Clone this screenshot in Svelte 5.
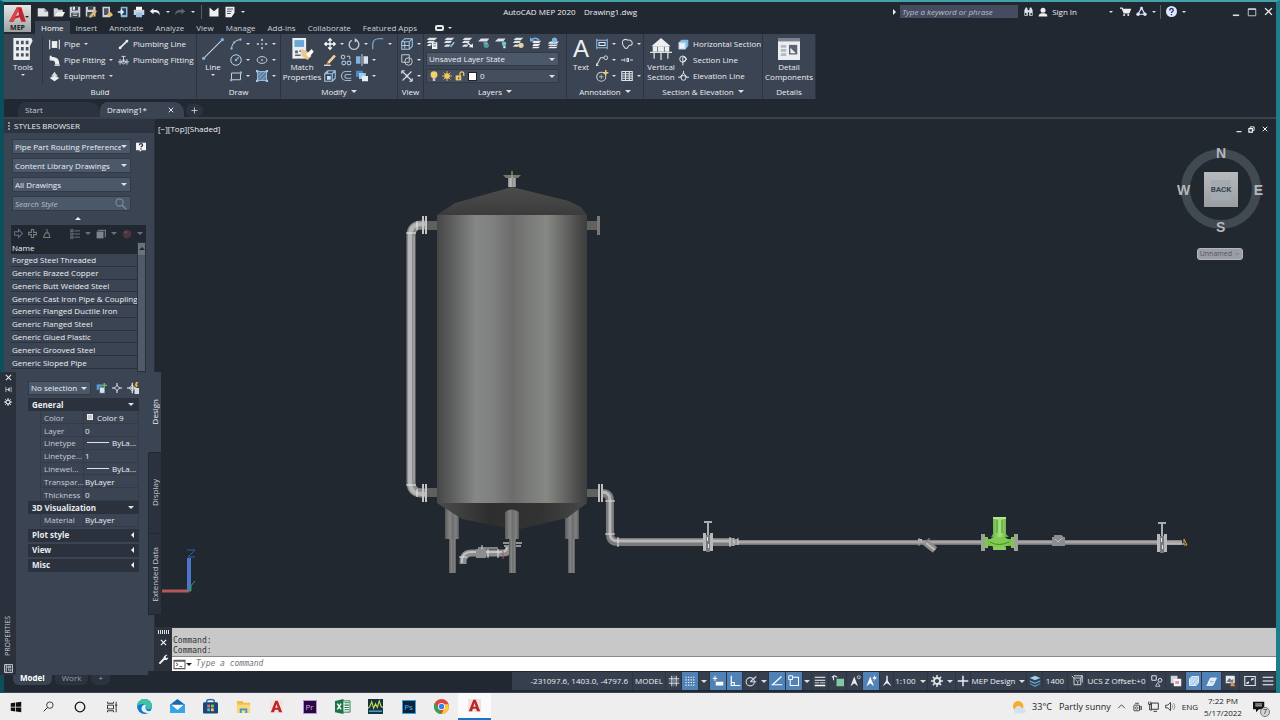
<script>
// every icon is drawn on a 16 x 16 grid
const icons = {
    newFile: '<path d="M1 3h9l5 5v6H1z" fill="#dfe1e4"/><path d="M10 3v5h5z" fill="#8d939c"/>',
    open: '<path d="M1 14V3h5l1 2h6v3H5z" fill="#cfd2d6"/><path d="M5 8h11l-3 6H1z" fill="#f0f0f0"/>',
    save: '<path d="M1 1h14v14H1z" fill="#c9cdd3"/><path d="M4 1h8v5H4zM3 9h10v6H3z" fill="#3b4350"/><path d="M5 1h3v4H5zM5 10h6v1H5zM5 12h6v1H5z" fill="#e9ebee"/>',
    saveAs: '<path d="M1 1h13v13H1z" fill="#c9cdd3"/><path d="M4 1h7v4H4zM3 8h9v6H3z" fill="#3b4350"/><path d="M6 13l7-8 3 2-7 8-3 1z" fill="#e2b866"/>',
    sheet: '<path d="M2 1h10v14H2z" fill="#cfd2d6"/><path d="M4 3h6v9H4z" fill="#4b5563"/><path d="M8 11l5-3 3 4-4 3z" fill="#e3bb62"/>',
    device: '<rect x="5" y="1" width="9" height="14" rx="1" fill="#8bb9dc"/><path d="M7 3h5v9H7z" fill="#2b4258"/><path d="M1 8h7M5 5l3 3-3 3" stroke="#e4f0fa" stroke-width="2" fill="none"/>',
    print: '<path d="M4 1h8v5H4z" fill="#fff"/><path d="M1 5h14v7H1z" fill="#cfd2d6"/><path d="M4 9h8v6H4z" fill="#8fc3ea"/>',
    undo: '<path d="M6 3L1 7l5 4V8.500c5-.5 7 1 8 4 1-5-2-7.500-8-7z" fill="#eceef0"/>',
    redo: '<path d="M10 3l5 4-5 4V8.500c-5-.5-7 1-8 4-1-5 2-7.500 8-7z" fill="#5c6470"/>',
    flag: '<path d="M2 2l6 5 6-5v12H2z" fill="#eceef0"/>',
    form: '<path d="M2 1h12v8l-4 6H2z" fill="#eceef0"/><path d="M4 4h8M4 7h6M4 10h5" stroke="#4b5563" stroke-width="1.500"/>',
    glasses: '<path d="M2 14V6l2-4h2l1 4v8zM9 14V6l1-4h2l2 4v8zM6 6h4v3H6z" fill="#dfe3ea"/><path d="M3 10h2v3H3zM11 10h2v3h-2z" fill="#28303b"/>',
    user: '<circle cx="8" cy="5" r="4" fill="#eceef0"/><path d="M1 15c0-4 3-5 5-5h4c2 0 5 1 5 5z" fill="#eceef0"/>',
    cart: '<path d="M0 3h3l3 7h7l2-5H4" fill="none" stroke="#eceef0" stroke-width="2"/><path d="M5 5h10l-2 5H6z" fill="#eceef0"/><circle cx="6" cy="13" r="1.500" fill="#eceef0"/><circle cx="12" cy="13" r="1.500" fill="#eceef0"/>',
    nodes: '<path d="M8 3L3 12h10z" fill="none" stroke="#dfe6ff" stroke-width="1.800"/><circle cx="8" cy="3" r="2" fill="#dfe6ff"/><circle cx="3" cy="12" r="2.500" fill="#dfe6ff"/><circle cx="13" cy="12" r="2.500" fill="#dfe6ff"/>',
    help: '<circle cx="8" cy="8" r="8" fill="#dfe6ff"/><path d="M5.500 6.500c0-4 5-3.500 5-.5 0 2-2.500 2-2.500 4M8 11.500v2" stroke="#2b3d80" stroke-width="2" fill="none"/>',
    minimize: '<path d="M3 12h10v2.500H3z" fill="#dde1e6"/>',
    maximize: '<path d="M2 3h12v11H2z" fill="none" stroke="#dde1e6" stroke-width="1.300"/><path d="M2 3.500h12" stroke="#dde1e6" stroke-width="2"/>',
    restore: '<path d="M5 5V2h9v8h-3" fill="none" stroke="#fff" stroke-width="2"/><path d="M2 6h8v8H2z" fill="none" stroke="#fff" stroke-width="2.500"/>',
    close: '<path d="M2 2l12 12M14 2L2 14" stroke="currentColor" stroke-width="2.500"/>',
    plus: '<path d="M8 1v14M1 8h14" stroke="currentColor" stroke-width="2"/>',

    tools: '<path d="M2 0h12l1 2-2 4v10H1V0z" fill="#eceef0"/><path d="M3 2h2v2.500H3zM6.500 2h2v2.500h-2zM3 6.500h2V9H3zM6.500 6.500h2V9h-2zM3 11h2v2.500H3zM6.500 11h2v2.500h-2zM10 6.500h2V9h-2zM10 11h2v2.500h-2zM10 2h2v2.500h-2z" fill="#4a5362"/>',
    pipe: '<path d="M1 1v14M15 1v14" stroke="#dfe3e8" stroke-width="1.700"/><path d="M4 3h8v10H4z" fill="#eceef0"/>',
    fitting: '<path d="M1 1v7h3c4 0 5 2 5 6h6C15 6 12 3 4 3V1z" fill="#eceef0"/><path d="M8 14h8v2H8z" fill="#c7cbd1"/>',
    equipment: '<path d="M8 1l5 7H3z" fill="#d4d8dd"/><path d="M1 10l7-3 7 3-7 5z" fill="#eceef0"/>',
    plumbLine: '<path d="M3 13L13 3" stroke="#eceef0" stroke-width="2.500"/><circle cx="3" cy="13" r="2" fill="#eceef0"/><circle cx="13" cy="3" r="2" fill="#eceef0"/>',
    plumbFit: '<path d="M0 10h16M3 6v8M13 6v8M8 2v8M5 2h6" stroke="#dfe3e8" stroke-width="1.300"/><circle cx="8" cy="10" r="3" fill="none" stroke="#dfe3e8"/>',
    line: '<path d="M1 15L15 1" stroke="#c5d2df" stroke-width=".8"/><circle cx="1.200" cy="14.800" r="1.200" fill="#7fb2e2"/><circle cx="14.800" cy="1.200" r="1.200" fill="#7fb2e2"/>',
    arc: '<path d="M2 14C3 7 7 3 14 2" fill="none" stroke="#c5d2df" stroke-width="1.300"/><circle cx="2" cy="14" r="1.600" fill="#7fb2e2"/><circle cx="5.500" cy="6" r="1.600" fill="#7fb2e2"/><circle cx="14" cy="2" r="1.600" fill="#7fb2e2"/>',
    points: '<path d="M8 1v3M8 12v3M1 8h3M12 8h3M7 8h2" stroke="#c5d2df" stroke-width="2"/>',
    circle: '<circle cx="8" cy="8" r="7" fill="none" stroke="#c5d2df" stroke-width="1.300"/><path d="M8 8l4-4" stroke="#7fb2e2" stroke-width="1.500"/><circle cx="8" cy="8" r="1.600" fill="#7fb2e2"/>',
    ellipse: '<ellipse cx="8" cy="8" rx="6.500" ry="4.500" fill="none" stroke="#c5d2df" stroke-width="1.300"/><circle cx="8" cy="8" r="1.500" fill="#7fb2e2"/>',
    rect: '<path d="M2 4h12v9H2z" fill="none" stroke="#c5d2df" stroke-width="1.300"/><path d="M0 12h3v3H0zM13 2h3v3h-3z" fill="#7fb2e2"/>',
    hatch: '<path d="M2 2h12v12H2z" fill="#5d7fa3" stroke="#b7d1ea"/><path d="M2 8l6-6M2 13L13 2M7 14l7-7" stroke="#9fc0df"/><path d="M0 0h3v3H0zM13 0h3v3h-3zM0 13h3v3H0zM13 13h3v3h-3z" fill="#a6c8e8"/>',
    match: '<path d="M1 0h10v15H1z" fill="#eceef0"/><path d="M2.500 1.500h7v5h-7z" fill="#69a8da"/><path d="M3 9h2v2H3zM6 9h3v1H6zM3 12h4v1H3z" fill="#596374"/><path d="M7 8l4 1 4 4-3 3-4-3z" fill="#e9c98b"/><path d="M11 12l4-4 1.500 2-3.500 4z" fill="#fff"/>',
    move: '<path d="M8 1v14M1 8h14M5.500 3.500L8 1l2.500 2.500M5.500 12.500L8 15l2.500-2.500M3.500 5.500L1 8l2.500 2.500M12.500 5.500L15 8l-2.500 2.500" fill="none" stroke="#fff" stroke-width="1.700"/>',
    rotate: '<path d="M11 3a6.500 6.500 0 1 1-6 0" fill="none" stroke="#c5d2df" stroke-width="1.700"/><path d="M9 0l4 3-4 3" fill="#c5d2df"/>',
    fillet: '<path d="M1 15V9c0-5 3-8 8-8h6" fill="none" stroke="#7fb2e2" stroke-width="1.500"/>',
    erase: '<path d="M4 11L13 1l3 2-9 10z" fill="#efd09a"/><path d="M4 11l3 2-4 2z" fill="#d8684c"/><path d="M0 15h9" stroke="#fff" stroke-width="1.500"/>',
    copy: '<circle cx="4" cy="4" r="2.500" fill="none" stroke="#c5d2df" stroke-width="1.300"/><path d="M9 3h4v4" fill="none" stroke="#c5d2df" stroke-width="1.300"/><circle cx="5" cy="12" r="2.500" fill="none" stroke="#9fc3e4" stroke-width="1.500"/><circle cx="12" cy="12" r="2.500" fill="none" stroke="#9fc3e4" stroke-width="1.500"/>',
    mirror: '<path d="M0 3h6v10H0z" fill="#7fb2e2"/><path d="M10 3h6v10h-6z" fill="#d9e4ee"/><path d="M8 0v16" stroke="#fff"/>',
    box: '<path d="M1 5h10v10H1zM1 5l4-4h10v10l-4 4M11 5l4-4M5 1v4" fill="none" stroke="#9cc3e6" stroke-width="1.500"/><path d="M4 8h5v5H4z" fill="#c9dff2"/>',
    offset: '<path d="M15 2H8a6 6 0 0 0 0 12h7M15 6H9a2.500 2.500 0 0 0 0 5h6" fill="none" stroke="#9fb9d2" stroke-width="1.600"/>',
    stack: '<path d="M0 1h9v8H0z" fill="#4d8cc0"/><path d="M4 4h9v8H4z" fill="#9ccaf0"/><path d="M8 8h8v7H8z" fill="#eceef0"/>',
    view3d: '<path d="M1 5h10v10H1zM1 5l4-4h10v10l-4 4M11 5l4-4M5 5v9M1 10h10" fill="none" stroke="#a9c8e6" stroke-width="1.400"/>',
    region: '<path d="M1 1h10v10H1z" fill="none" stroke="#c5cdd6" stroke-width="1.300"/><circle cx="10" cy="10" r="5" fill="none" stroke="#c5cdd6" stroke-width="1.300"/>',
    explode: '<path d="M2 2l12 12M14 2L2 14M1 1v4M1 1h4M15 15v-4M15 15h-4" stroke="#d6dbe1" stroke-width="1.500"/><circle cx="8" cy="8" r="2" fill="#d6dbe1"/>',
    layerProps: '<path d="M4 1h11l-3 3H1zM4 5h8l-3 3H1zM4 9h4l-2 3H1z" fill="#dfe3e8"/><path d="M8 7h7v9H8z" fill="#f4f5f6"/><path d="M9.500 9h4M9.500 12h4" stroke="#4d5868"/>',
    layerSet: '<path d="M5 1h10l-3 3H2zM4 5h8l-2 3H1zM4 10h6l-2 3H1z" fill="#dfe3e8"/><path d="M10 13l5-6" stroke="#8fc3ea" stroke-width="2"/>',
    layerMove: '<path d="M5 1h10l-3 3H2zM4 5h8l-2 3H1zM4 10h6l-2 3H1z" fill="#dfe3e8"/><path d="M9 8l6 5v-4M15 13h-4" stroke="#fff" stroke-width="1.500" fill="none"/>',
    layerOff: '<path d="M4 2h11l-3 4H0z" fill="#dfe3e8"/><circle cx="11" cy="11" r="3.500" fill="#4f9c9b"/><path d="M7 8h6" stroke="#dfe3e8"/>',
    layerBulb: '<path d="M4 2h10l-3 4H0z" fill="#dfe3e8"/><circle cx="12" cy="9" r="3" fill="#67c9c9"/><path d="M11 12h3v3h-3z" fill="#dfe3e8"/>',
    layerLock: '<path d="M5 1h10l-3 3H2zM4 5h8l-2 3H1zM4 10h6l-2 3H1z" fill="#dfe3e8"/><circle cx="12" cy="11" r="3.500" fill="#e5cf9b"/>',
    layerPrev: '<path d="M5 5h10l-3 3H3zM5 9h9l-3 3H3zM4 13h9l-2 2H3z" fill="#eceef0"/><path d="M12 4C9 1 5 1 2 4M1 1v4h4" fill="none" stroke="#67b5e8" stroke-width="2"/>',
    layerWalk: '<path d="M4 6h12l-3 3H1zM4 10h11l-3 2H1zM4 13h10l-2 2H1z" fill="#eceef0"/><circle cx="10" cy="4" r="3.500" fill="#77b8e3"/>',
    bulb: '<circle cx="8" cy="6" r="5.500" fill="#f4d070"/><path d="M6 11h4v5H6z" fill="#c2c6cc"/>',
    sun: '<circle cx="8" cy="8" r="4.500" fill="#f3c95c"/><path d="M8 0v16M0 8h16M2.500 2.500l11 11M13.500 2.500l-11 11" stroke="#f3c95c" stroke-width="1.300"/>',
    unlock: '<path d="M1 7h9v8H1z" fill="#f0c96c"/><path d="M8 7V3.500c0-3 6-3 6 0V8" fill="none" stroke="#f0c96c" stroke-width="2"/><path d="M5 10h2v3H5z" fill="#4b5666"/>',
    dim: '<path d="M1 1v14M15 1v14M1 3h14M1 13h14" stroke="#8dbbe4" stroke-width="1.400"/><path d="M4 6h8v4H4z" fill="none" stroke="#e6ebf0" stroke-width="1.400"/>',
    cloud: '<path d="M3 3c3-2 5-1 6 0 4-1 6 2 6 4s-2 3-4 3-1 4-4 4-3-3-4-4-2-5 0-7z" fill="none" stroke="#d6dbe1" stroke-width="1.400"/>',
    leader: '<path d="M1 15L6 5h5" fill="none" stroke="#d6dbe1" stroke-width="1.400"/><circle cx="13" cy="5" r="2.500" fill="none" stroke="#d6dbe1" stroke-width="1.300"/><path d="M0 12l4 4H0z" fill="#d6dbe1"/>',
    gap: '<path d="M0 8h4M12 8h4M5 6v4M8 6h2v4H8z" fill="none" stroke="#d6dbe1" stroke-width="1.400"/>',
    tag: '<circle cx="7" cy="9" r="6" fill="none" stroke="#c8ced6" stroke-width="1.400"/><path d="M4 9h6M7 6v6" stroke="#c8ced6"/><path d="M13 0v7M9.500 3.500h7" stroke="#f0c96c" stroke-width="2"/>',
    table: '<path d="M1 2h14v12H1zM1 5h14M1 8h14M1 11h14M6 2v12M11 2v12" fill="none" stroke="#dfe3e8" stroke-width="1.400"/>',
    house: '<path d="M8 0l7 6H1z" fill="#eceef0"/><path d="M2 6h12v4H2z" fill="#eceef0"/><path d="M0 10.500h16M3 10v5M8 10v6M13 10v5" fill="none" stroke="#dfe3e8" stroke-width=".9"/><path d="M5.500 6.500V10M10.500 6.500V10" stroke="#59616d" stroke-width=".6"/>',
    hSection: '<path d="M1 5l4-4h10v9l-4 5H1z" fill="#7fb8e6"/><path d="M1 5h10v10H1z" fill="#d5e3ef"/><path d="M3 7h6v6H3z" fill="#edf2f6"/>',
    sLine: '<circle cx="7" cy="6" r="4.500" fill="none" stroke="#e3e7ec" stroke-width="1.400"/><path d="M7 3v12M7 2l6 4-6 4" fill="none" stroke="#e3e7ec" stroke-width="1.400"/>',
    eLine: '<path d="M0 9h4M12 9h4M3 9l5-6 5 6M8 0v3" fill="none" stroke="#e3e7ec" stroke-width="1.400"/><circle cx="8" cy="10" r="3.500" fill="none" stroke="#e3e7ec" stroke-width="1.400"/>',
    detail: '<path d="M0 0h16v16H0z" fill="#eceef0"/><path d="M0 0h16v2.500H0z" fill="#7b838f"/><path d="M2 5h4v2H2zM2 8h4v2H2zM2 11h4v2H2z" fill="#b5bac1"/><path d="M8 5h6v7H8z" fill="#596374"/><path d="M9 7l4 4H9z" fill="#eceef0"/>',

    question: '<path d="M0 1h16v12H9l-3 3v-3H0z" fill="#f2f4f6"/><path d="M5.500 5c0-3 5-3 5 0 0 2-2.500 1.500-2.500 3.500M8 10v2" fill="none" stroke="#252c36" stroke-width="2"/>',
    search: '<circle cx="6" cy="6" r="4.800" fill="none" stroke="currentColor" stroke-width="1.600"/><path d="M9.500 9.500L15 15" stroke="currentColor" stroke-width="2"/>',
    arrowR: '<path d="M1 5h7V1l7 7-7 7v-4H1z" fill="none" stroke="#66717c" stroke-width="1.800"/>',
    cross: '<path d="M6 1h4v5h5v4h-5v5H6v-5H1V6h5z" fill="none" stroke="#747f79" stroke-width="1.800"/>',
    broom: '<path d="M9 0v7M3 14l3-7h6l2 8H3z" fill="none" stroke="#77807c" stroke-width="1.800"/>',
    list: '<path d="M1 1h4v3H1zM1 6.500h4v3H1zM1 12h4v3H1zM7 3h9M7 8h9M7 13h9" fill="none" stroke="#6c757f" stroke-width="1.500"/>',
    cube: '<path d="M1 4h11v11H1z" fill="#7c848c"/><path d="M3 2h12v11" fill="none" stroke="#6c757f" stroke-width="2"/>',
    ball: '<circle cx="8" cy="8" r="7" fill="#49353a"/><circle cx="6" cy="5" r="2" fill="#67505a"/>',
    selAdd: '<path d="M1 2h8v8H1z" fill="#5b9bd0"/><path d="M5 6h8v9H5z" fill="#d7e2ec" stroke="#33465c"/><path d="M12 0v7M9 3.500h7" stroke="#65c466" stroke-width="2"/>',
    target: '<path d="M8 0v5M8 11v5M0 8h5M11 8h5" stroke="#f4f5f6" stroke-width="1.600"/><path d="M8 4l4 4-4 4-4-4z" fill="none" stroke="#f4f5f6" stroke-width="1.300"/>',
    quick: '<path d="M7 1v14M0 8h12" stroke="#f4f5f6" stroke-width="1.500"/><path d="M7 4l4 4-4 4-4-4z" fill="none" stroke="#f4f5f6"/><path d="M10 8h6v8h-6z" fill="#d8dbe0"/><path d="M12 0h3l-2 4h2l-4 5 1-4h-2z" fill="#efb54a"/>',
    pin: '<path d="M2 2v12M14 2v12M2 8h4M10 4l-4 4 4 4z" stroke="#cfd4da" stroke-width="1.700" fill="#cfd4da"/>',
    gear: '<circle cx="8" cy="8" r="4" fill="none" stroke="#dfe3e8" stroke-width="2.500"/><path d="M8 0v4M8 12v4M0 8h4M12 8h4M2.500 2.500L5 5M11 11l2.500 2.500M13.500 2.500L11 5M5 11l-2.500 2.500" stroke="#dfe3e8" stroke-width="2"/>',
    panel: '<path d="M1 1h14v14H1zM4 1v14M7 4h5v3H7zM7 10h2v3M12 9v4" fill="none" stroke="#dfe3e8" stroke-width="1.500"/>',
    wrench: '<path d="M2 14l7-7" stroke="#f0f1f3" stroke-width="3"/><path d="M8 8c-1-4 2-7 6-7l-3 3 1 2 3-1c0 3-3 5-7 3z" fill="#f0f1f3"/>',
    prompt: '<path d="M0 2h16v12H0z" fill="#fff" stroke="#5a5a5a" stroke-width="1.500"/><path d="M0 3h16" stroke="#5a5a5a" stroke-width="2"/><path d="M3 6l3 2-3 2M8 11h4" fill="none" stroke="#444" stroke-width="1.200"/>',

    grid: '<path d="M5 1v14M11 1v14M1 5h14M1 11h14" stroke="#dfe3e8" stroke-width="1.300"/><path d="M8 1v14M1 8h14" stroke="#9aa2ad" stroke-width="1"/>',
    snap: '<path d="M2 3h12M2 6.500h12M2 10h12M2 13.500h12" stroke="#fff" stroke-width="1.600" stroke-dasharray="1.600 1.800"/>',
    dynIn: '<path d="M4 1v7M1 4.500h6" stroke="#fff" stroke-width="1.300"/><path d="M5 9h10v5H5z" fill="#fff"/>',
    ortho: '<path d="M3 1v13h12M3 10h4v4" fill="none" stroke="#fff" stroke-width="1.600"/>',
    polar: '<circle cx="7" cy="9" r="5.500" fill="none" stroke="#cfd4da" stroke-width="1.500"/><path d="M7 9l8-7M7 9h8" stroke="#cfd4da" stroke-width="1.500"/>',
    track: '<path d="M14 2L2 13h13" fill="none" stroke="#fff" stroke-width="1.600"/>',
    osnap: '<path d="M3 3h11v11H3z" fill="none" stroke="#fff" stroke-width="1.400"/><path d="M1 1h5v5H1z" fill="#5889bd" stroke="#fff" stroke-width="1.300"/>',
    weight: '<path d="M1 3h14M1 7h14" stroke="#fff" stroke-width="1.300"/><path d="M1 10h6v1H1zM8 10h7v1H8zM1 13h14v2H1z" fill="#fff"/>',
    cycle: '<path d="M2 1v6M0 3l3-2 4 2" fill="none" stroke="#dfe3e8" stroke-width="1.500"/><path d="M6 5h10v10H6z" fill="#83c8a3"/>',
    anno: '<path d="M7 2L2 15l5-4 5 4z" fill="#e8ebee"/><circle cx="13" cy="3" r="2" fill="none" stroke="#e8ebee"/>',
    annoAuto: '<path d="M7 2L2 15l5-4 5 4z" fill="#fff"/><path d="M13 0l-3 5h3l-2 4 5-6h-3z" fill="#fff"/>',
    annoOne: '<path d="M8 1v5L2 15l6-4 6 4-6-9" fill="#e8ebee"/><path d="M7 1h2v8H7z" fill="#e8ebee"/>',
    layers: '<path d="M8 1l7 3-7 3-7-3z" fill="#9fd0f2"/><path d="M1 7l7 3 7-3v2l-7 3-7-3zM1 11l7 3 7-3v1l-7 4-7-4z" fill="#5f9ed0"/>',
    ucs: '<path d="M4 4h9v9H4zM4 4L1 1M13 4l2-3M4 1h11v9" fill="none" stroke="#cfd4da" stroke-width="1.300"/><path d="M6 6l3 3 3-3M9 9v4" fill="none" stroke="#cfd4da"/>',
    shapes: '<path d="M1 1h6v6H1z" fill="none" stroke="#dfe3e8" stroke-width="1.300"/><circle cx="12" cy="7" r="2.500" fill="none" stroke="#dfe3e8" stroke-width="1.300"/><path d="M6 15l3-5 3 5z" fill="none" stroke="#dfe3e8"/>',
    pages: '<path d="M1 1h9v10H1z" fill="#cfd4da"/><path d="M5 5h10v10H5z" fill="#f3f3f3"/><path d="M7 8h5v4H7z" fill="#e49a9f"/>',
    hatched: '<path d="M2 5l3-3h9v8l-3 4H2z" fill="#a9cdeb" stroke="#fff"/><path d="M2 9l5-5M2 13l9-9M7 14l6-7" stroke="#fff"/>',
    clip: '<path d="M3 10l3-6h8l-2 4zM1 14l3-5h8l-3 5z" fill="#d9eafa" stroke="#fff"/><path d="M5 9h5" stroke="#5082b8"/>',
    photo: '<path d="M1 1h12v10H1z" fill="#e9ecef"/><path d="M2 9l4-5 3 3 2-2v5z" fill="#6b7584"/><path d="M9 8l5 7H7z" fill="#e58b4c"/>',
    screen: '<path d="M1 2h14v12H1z" fill="none" stroke="#dfe3e8" stroke-width="1.500"/><path d="M3 11l3-2v2zM13 5l-3 2V5z" fill="#fff" stroke="#fff"/>',
    menu: '<path d="M1 3h14M1 8h14M1 13h14" stroke="#fff" stroke-width="1.500"/>',

    windows: '<path d="M1 3l6-1v5.500H1zM8 2l7-1v6.500H8zM1 8.500h6V14l-6-1zM8 8.500h7V15l-7-1z" fill="#111"/>',
    find: '<circle cx="10" cy="6" r="4.700" fill="none" stroke="#222" stroke-width="1.200"/><path d="M6.500 9.500L1 15" stroke="#222" stroke-width="1.400"/>',
    cortana: '<circle cx="8" cy="8" r="6.400" fill="none" stroke="#111" stroke-width="1.700"/>',
    tasks: '<path d="M2 1v2h8V1M2 15v-2h8v2M2 5.500h8v5H2zM13.500 1v14M12 5.500h3" fill="none" stroke="#222" stroke-width="1.200"/>',
    edge: '<circle cx="8" cy="8" r="8" fill="#1679c8"/><path d="M0 8C0 3 4 0 8 0c5 0 8 3.500 8 7 0 3-2 4-4 4s-3-1-2-3c0-3-6-4-10 0z" fill="#3ec3a6"/><path d="M6 7c-3 4 0 8 5 8 2 0 4-1 5-3-3 2-7 1-7-3 0-1 1-2 0-3-1 0-2 0-3 1z" fill="#e7f4fb"/>',
    mail: '<path d="M0 6l8-6 8 6v9H0z" fill="#1469b5"/><path d="M1 6h14l-7 6z" fill="#f3f8fc"/><path d="M0 6l8 6 8-6v9H0z" fill="#33a7ec"/>',
    store: '<path d="M4 4V2c0-2 8-2 8 0v2" fill="none" stroke="#2c6da5" stroke-width="1.500"/><rect y="3.500" width="16" height="12" rx="1.500" fill="#1a4778"/><path d="M4.500 6h3v3h-3z" fill="#f06a4b"/><path d="M8.500 6h3v3h-3z" fill="#8ac653"/><path d="M4.500 10h3v3h-3z" fill="#4db4f0"/><path d="M8.500 10h3v3h-3z" fill="#f8c84c"/>',
    folder: '<path d="M1 2h6l1 2h7v11H1z" fill="#efbd48"/><path d="M1 6h14v9H1z" fill="#fbd979"/><path d="M4 10h8v5h-2v-3H6v3H4z" fill="#3f96cc"/>',
    acad: '<path d="M0 0h16v16H0z" fill="#f4e1de"/><path d="M6.500 1h3L15 15h-4l-1-3H6l-1 3H1zM8 5l-1.500 4.500h3z" fill="#b8282b" fill-rule="evenodd"/>',
    logo: '<path d="M7 1h4l4 13h-4l-1.500-4-4 1L4 14H0zM8 4L6 9l3-1z" fill="#c3222c" fill-rule="evenodd"/><path d="M7 1L0 14l4-1L9 3z" fill="#dc4448"/>',
    excel: '<path d="M8 2h8v12H8z" fill="#fff" stroke="#1f7a48"/><path d="M10 4h5M10 6.500h5M10 9h5M10 11.500h5" stroke="#1f7a48" stroke-width="1.200"/><path d="M0 2l9-2v16l-9-2z" fill="#1c7343"/><path d="M2.500 5l4 6M6.500 5l-4 6" stroke="#fff" stroke-width="1.600"/>',
    wave: '<path d="M0 0h16v16H0z" fill="#123444"/><path d="M0 10l2-2 2-5 2 7 2-5 2 4 2-7 2 6 2 1" fill="none" stroke="#cdda4a" stroke-width="1.200"/><path d="M1 13h14" stroke="#57a7cf" stroke-width="1.500"/>',
    chrome: '<circle cx="8" cy="8" r="8" fill="#e0443a"/><path d="M1 4l4.500 7L8 16A8 8 0 0 1 1 4z" fill="#36a354"/><path d="M15.500 5.500A8 8 0 0 1 8 16l4-8-1-2.500z" fill="#fbcb3c"/><circle cx="8" cy="8" r="3.800" fill="#fff"/><circle cx="8" cy="8" r="2.900" fill="#3b7ded"/>',
    weather: '<circle cx="7" cy="7" r="6" fill="#f5ad2e"/><path d="M4 15a3.500 3.500 0 0 1 0-6c1-3 6-3 7 0 6 0 6 6 2 6z" fill="#d5e1ec"/>',
    chevron: '<path d="M2 11l6-6 6 6" fill="none" stroke="#222" stroke-width="1.400"/>',
    meet: '<rect x="3" y="5" width="9" height="9" rx="1" fill="none" stroke="#222" stroke-width="1.300"/><path d="M12 8l3-1v5l-3-1M5 2h6" fill="none" stroke="#222" stroke-width="1.300"/><circle cx="7.500" cy="9.500" r="2" fill="none" stroke="#222"/>',
    network: '<path d="M5 3h10v9H5zM8 15h5M1 1v4h3V1M2.500 5v8H6" fill="none" stroke="#222" stroke-width="1.300"/>',
    volume: '<path d="M1 6h3l4-4v12l-4-4H1z" fill="none" stroke="#222" stroke-width="1.200"/><path d="M10 5c1.500 2 1.500 4 0 6M12 3c3 3 3 7 0 10" fill="none" stroke="#777" stroke-width="1.200"/>',
    notice: '<path d="M0 1h15v10H8l-4 4v-4H0z" fill="#111"/><path d="M3 4h9M3 6.500h9" stroke="#eee" stroke-width="1.200"/>'
};

const quickAccess = ['newFile', 'open', 'save', 'saveAs', 'sheet', 'device', 'print', 'undo', '', 'redo', '', '|', 'flag', 'form', ''];
const ribbonTabs = ['Home', 'Insert', 'Annotate', 'Analyze', 'View', 'Manage', 'Add-ins', 'Collaborate', 'Featured Apps'];
const layerTools = ['layerProps', 'layerSet', 'layerMove', 'layerOff', 'layerBulb', 'layerLock', 'layerPrev', 'layerWalk'];
const pipeStyles = [
    'Forged Steel Threaded',
    'Generic Brazed Copper',
    'Generic Butt Welded Steel',
    'Generic Cast Iron Pipe & Couplings',
    'Generic Flanged Ductile Iron',
    'Generic Flanged Steel',
    'Generic Glued Plastic',
    'Generic Grooved Steel',
    'Generic Sloped Pipe'
];
const general = [
    ['Color', 'Color 9', 'swatch'],
    ['Layer', '0'],
    ['Linetype', 'ByLa...', 'stroke'],
    ['Linetype...', '1'],
    ['Linewei...', 'ByLa...', 'stroke'],
    ['Transpar...', 'ByLayer'],
    ['Thickness', '0']
];
const statusItems = [
    { text: '-231097.6, 1403.0, -4797.6', end: true },
    { text: 'MODEL' },
    { icon: 'grid' },
    { icon: 'snap', on: true },
    { caret: true },
    { icon: 'dynIn', on: true },
    { icon: 'ortho', on: true },
    { icon: 'polar' },
    { caret: true },
    { icon: 'track', on: true },
    { icon: 'osnap', on: true },
    { caret: true },
    { icon: 'weight' },
    { icon: 'cycle' },
    { icon: 'anno' },
    { icon: 'annoAuto', on: true },
    { icon: 'annoOne' },
    { text: '1:100', caret: true },
    { icon: 'gear', caret: true },
    { icon: 'plus' },
    { text: 'MEP Design', caret: true },
    { icon: 'layers' },
    { text: '1400' },
    { icon: 'ucs' },
    { text: 'UCS Z Offset:+0' },
    { icon: 'shapes' },
    { icon: 'pages' },
    { icon: 'hatched', on: true },
    { icon: 'clip', on: true },
    { icon: 'photo' },
    { icon: 'screen' },
    { icon: 'menu' }
];
const systemApps = ['windows', 'find', 'cortana', 'tasks'];
const apps = ['edge', 'mail', 'store', 'folder', 'acad', 'Pr', 'excel', 'wave', 'Ps', 'chrome', 'acad'];

let activeTab = 'Home';
let search = '';
let styleSearch = '';
let command = '';
</script>

{#snippet icon(name, size = 12)}
    <svg class="icon" width={size} height={size} viewBox="0 0 16 16" aria-hidden="true">{@html icons[name]}</svg>
{/snippet}

{#snippet tool(name, caret = true)}
    <button class="tool" aria-label={name}>
        {@render icon(name)}
        {#if caret}<i class="caret small"></i>{/if}
    </button>
{/snippet}

{#snippet command_(name, label, caret = false)}
    <button class="cmd">{@render icon(name, 11)}<span>{label}</span>{#if caret}<i class="caret small"></i>{/if}</button>
{/snippet}

{#snippet valve(x, y)}
    <g transform="translate({x} {y})">
        <path d="M-1-20h2v14h-2zM-4-21h8v2h-8z" fill="#a9adb2" />
        <path d="M-5-9h3v18h-3zM2-9h3v18H2z" fill="#b6b8bb" />
        <path d="M-2-7h4v17h-4z" fill="#77797c" />
        <path d="M-1-5h1v4h-1zM0 2h1v4H0z" fill="#e4e5e6" />
    </g>
{/snippet}

<div class="screen">
    <main class="window">
        <header>
            <button class="app" aria-label="Application menu">
                {@render icon('logo', 18)}
                <span>MEP</span>
                <i class="caret small dark"></i>
            </button>
            <div class="head">
                <div class="titlebar">
                    <div class="qat">
                        {#each quickAccess as item}
                            {#if item === '|'}
                                <i class="rule"></i>
                            {:else if item === ''}
                                <button class="drop" aria-label="More"><i class="caret small"></i></button>
                            {:else}
                                <button class="qbtn" aria-label={item}>{@render icon(item)}</button>
                            {/if}
                        {/each}
                    </div>
                    <h1>AutoCAD MEP 2020 &nbsp;&nbsp; Drawing1.dwg</h1>
                    <div class="info">
                        <i class="right"></i>
                        <input type="text" aria-label="Search help" placeholder="Type a keyword or phrase" bind:value={search}>
                        <button class="qbtn" aria-label="Find">{@render icon('glasses', 11)}</button>
                        <button class="sign">{@render icon('user', 10)}<span>Sign In</span><i class="caret small"></i></button>
                        <button class="qbtn" aria-label="Store">{@render icon('cart', 11)}</button>
                        <button class="qbtn" aria-label="Apps">{@render icon('nodes', 11)}</button>
                        <button class="drop" aria-label="More apps"><i class="caret small"></i></button>
                        <i class="rule"></i>
                        <button class="qbtn" aria-label="Help">{@render icon('help', 11)}</button>
                        <button class="drop" aria-label="More help"><i class="caret small"></i></button>
                    </div>
                    <div class="winbtns">
                        <button aria-label="Minimize">{@render icon('minimize', 10)}</button>
                        <button aria-label="Maximize">{@render icon('maximize', 10)}</button>
                        <button aria-label="Close">{@render icon('close', 9)}</button>
                    </div>
                </div>
                <nav class="tabs">
                    {#each ribbonTabs as tab}
                        <button class:active={tab === activeTab} on:click={() => { activeTab = tab; }}>{tab}</button>
                    {/each}
                    <button class="rec" aria-label="Minimize ribbon"><i class="pill"></i><i class="caret small"></i></button>
                </nav>
            </div>
        </header>

        <section class="ribbon">
            <div class="panel">
                <div class="body build">
                    <button class="big ruled">{@render icon('tools', 22)}<span>Tools</span><i class="caret small"></i></button>
                    <div class="list">
                        {@render command_('pipe', 'Pipe', true)}
                        {@render command_('fitting', 'Pipe Fitting', true)}
                        {@render command_('equipment', 'Equipment', true)}
                    </div>
                    <div class="list">
                        {@render command_('plumbLine', 'Plumbing Line')}
                        {@render command_('plumbFit', 'Plumbing Fitting')}
                    </div>
                </div>
                <h2>Build</h2>
            </div>
            <div class="panel">
                <div class="body draw">
                    <button class="big">{@render icon('line', 22)}<span>Line</span><i class="caret small"></i></button>
                    <div class="grid two">
                        {#each ['arc', 'points', 'circle', 'ellipse', 'rect', 'hatch'] as name}{@render tool(name)}{/each}
                    </div>
                </div>
                <h2>Draw</h2>
            </div>
            <div class="panel">
                <div class="body modify">
                    <button class="big">{@render icon('match', 22)}<span>Match<br>Properties</span></button>
                    <div class="rows">
                        <div>{@render tool('move')}{@render tool('rotate')}{@render tool('fillet')}</div>
                        <div>{@render tool('erase', false)}{@render tool('copy', false)}{@render tool('mirror')}</div>
                        <div>{@render tool('box', false)}{@render tool('offset', false)}{@render tool('stack')}</div>
                    </div>
                </div>
                <h2>Modify <i class="caret"></i></h2>
            </div>
            <div class="panel">
                <div class="body view">
                    <div class="grid one">
                        {#each ['view3d', 'region', 'explode'] as name}{@render tool(name)}{/each}
                    </div>
                </div>
                <h2>View</h2>
            </div>
            <div class="panel">
                <div class="body layers">
                    <div class="strip">
                        {#each layerTools as name}<button aria-label={name}>{@render icon(name)}</button>{/each}
                    </div>
                    <div class="select">
                        <select aria-label="Layer state"><option>Unsaved Layer State</option></select>
                        <i class="caret"></i>
                    </div>
                    <div class="select layer">
                        {@render icon('bulb', 10)}{@render icon('sun', 10)}{@render icon('unlock', 10)}<i class="chip"></i>
                        <select aria-label="Layer"><option>0</option></select>
                        <i class="caret"></i>
                    </div>
                </div>
                <h2>Layers <i class="caret"></i></h2>
            </div>
            <div class="panel">
                <div class="body annotation">
                    <button class="big"><b>A</b><span>Text</span></button>
                    <div class="grid two">
                        {@render tool('dim')}{@render tool('cloud')}
                        {@render tool('leader')}{@render tool('gap', false)}
                        {@render tool('tag')}{@render tool('table')}
                    </div>
                </div>
                <h2>Annotation <i class="caret"></i></h2>
            </div>
            <div class="panel">
                <div class="body section">
                    <button class="big">{@render icon('house', 22)}<span>Vertical<br>Section</span></button>
                    <div class="list">
                        {@render command_('hSection', 'Horizontal Section')}
                        {@render command_('sLine', 'Section Line')}
                        {@render command_('eLine', 'Elevation Line')}
                    </div>
                </div>
                <h2>Section &amp; Elevation <i class="caret"></i></h2>
            </div>
            <div class="panel">
                <div class="body details">
                    <button class="big">{@render icon('detail', 22)}<span>Detail<br>Components</span></button>
                </div>
                <h2>Details</h2>
            </div>
        </section>

        <nav class="files">
            <button class="file">Start</button>
            <button class="file current"><span>Drawing1*</span>{@render icon('close', 6)}</button>
            <button class="file add" aria-label="New tab">{@render icon('plus', 7)}</button>
        </nav>

        <div class="work">
            <aside class="browser">
                <h3><i class="handle"></i>STYLES BROWSER</h3>
                <div class="filters">
                    <div class="select">
                        <select aria-label="Object type"><option>Pipe Part Routing Preferences</option></select>
                        <i class="caret"></i>
                    </div>
                    <button class="ask" aria-label="Help">{@render icon('question', 10)}</button>
                    <div class="select">
                        <select aria-label="Drawing source"><option>Content Library Drawings</option></select>
                        <i class="caret"></i>
                    </div>
                    <div class="select">
                        <select aria-label="Drawing file"><option>All Drawings</option></select>
                        <i class="caret"></i>
                    </div>
                    <label class="select find">
                        <input type="text" aria-label="Search style" placeholder="Search Style" bind:value={styleSearch}>
                        {@render icon('search', 12)}
                    </label>
                </div>
                <button class="fold" aria-label="Collapse"><i class="up"></i></button>
                <div class="styles">
                    <div class="styletools">
                        {@render icon('arrowR', 9)}{@render icon('cross', 9)}{@render icon('broom', 9)}
                        <span></span>
                        {@render icon('list', 10)}<i class="caret"></i>
                        {@render icon('cube', 10)}<i class="caret"></i>
                        {@render icon('ball', 10)}<i class="caret"></i>
                    </div>
                    <div class="scroll">
                        <table>
                            <thead><tr><th>Name</th></tr></thead>
                            <tbody>
                                {#each pipeStyles as name}
                                    <tr><td>{name}</td></tr>
                                {/each}
                            </tbody>
                        </table>
                        <div class="bar"><i class="up"></i></div>
                    </div>
                </div>
            </aside>

            <div class="center">
                <div class="viewport">
                    <svg class="drawing" viewBox="155 119 1121 508" role="img" aria-label="Vertical tank with piping">
                        <defs>
                            <linearGradient id="shell">
                                <stop offset="0" stop-color="#474747" />
                                <stop offset=".12" stop-color="#626463" />
                                <stop offset=".26" stop-color="#858886" />
                                <stop offset=".38" stop-color="#7d807e" />
                                <stop offset=".5" stop-color="#6c6c6c" />
                                <stop offset=".6" stop-color="#787a77" />
                                <stop offset=".73" stop-color="#858883" />
                                <stop offset=".85" stop-color="#666765" />
                                <stop offset=".94" stop-color="#4b4b4b" />
                                <stop offset="1" stop-color="#3e3e3e" />
                            </linearGradient>
                            <linearGradient id="dome" x2="0" y2="1">
                                <stop offset="0" stop-color="#4b4b4b" />
                                <stop offset=".6" stop-color="#434343" />
                                <stop offset="1" stop-color="#3b3b3b" />
                            </linearGradient>
                            <linearGradient id="cone">
                                <stop offset="0" stop-color="#4d4d4d" />
                                <stop offset=".35" stop-color="#2e2e2e" />
                                <stop offset=".7" stop-color="#333" />
                                <stop offset="1" stop-color="#484848" />
                            </linearGradient>
                            <linearGradient id="across">
                                <stop offset="0" stop-color="#8c8c8c" />
                                <stop offset=".35" stop-color="#c0c0c0" />
                                <stop offset=".55" stop-color="#8f8f8f" />
                                <stop offset=".8" stop-color="#a9a9a9" />
                                <stop offset="1" stop-color="#777" />
                            </linearGradient>
                            <linearGradient id="along" x2="0" y2="1">
                                <stop offset="0" stop-color="#777" />
                                <stop offset=".4" stop-color="#b4b4b4" />
                                <stop offset="1" stop-color="#686868" />
                            </linearGradient>
                            <linearGradient id="leg">
                                <stop offset="0" stop-color="#5b5b5b" />
                                <stop offset=".35" stop-color="#858585" />
                                <stop offset=".55" stop-color="#6d6d6d" />
                                <stop offset=".8" stop-color="#818181" />
                                <stop offset="1" stop-color="#555" />
                            </linearGradient>
                            <linearGradient id="motor">
                                <stop offset="0" stop-color="#63a83f" />
                                <stop offset=".5" stop-color="#a6e47c" />
                                <stop offset="1" stop-color="#5c9a3a" />
                            </linearGradient>
                        </defs>

                        <!-- legs -->
                        <path d="M449 530h7v43h-7z" fill="url(#leg)" />
                        <path d="M568 530h7v43h-7z" fill="url(#leg)" />
                        <path d="M445 508h14v31h-14z" fill="url(#leg)" />
                        <path d="M565 508h14v31h-14z" fill="url(#leg)" />

                        <!-- tank -->
                        <path d="M437 215l18-12 57-16 57 14 12 6 6 8z" fill="url(#dome)" />
                        <path d="M437 503h150l-20 15-47 11h-8l-50-10z" fill="url(#cone)" />
                        <rect x="437" y="215" width="150" height="288" fill="url(#shell)" />
                        <path d="M508 178h8v9h-8z" fill="url(#across)" />
                        <path d="M503 175h18l-3 3h-12z" fill="#777" />
                        <path d="M512 171v7" stroke="#d3b465" />

                        <!-- drain -->
                        <path d="M463 564v-2c0-6 3-9 9-9h31q6 0 6-6" fill="none" stroke="#8d8d8d" stroke-width="7" />
                        <path d="M462 563v-2c0-6 3-9 9-9h30q6 0 6-5" fill="none" stroke="#c2c2c2" stroke-width="2" />
                        <path d="M476 549h10v9h-10z" fill="#8b8d8f" />
                        <path d="M478 548h20M482 545v4M488 549v9M498 549v9M459 557h8" stroke="#dedede" fill="none" />
                        <path d="M503 543h19M504 546h17" stroke="#b5b5b5" stroke-width="1.500" />
                        <path d="M503 551v8" stroke="#ba5148" />
                        <path d="M509 530h7v43h-7z" fill="url(#leg)" />
                        <path d="M505 512q7-5 14 0v27h-14z" fill="url(#leg)" />

                        <!-- left loop -->
                        <path d="M427 221h10v9h-10zM427 488h10v9h-10z" fill="#5f5f5f" />
                        <path d="M426 225h-4q-11 0-11 11v246q0 11 11 11h4" fill="none" stroke="#8c8c8c" stroke-width="9" />
                        <path d="M426 224h-4q-12 0-12 12v246q0 12 12 12h4" fill="none" stroke="#b6b6b6" stroke-width="4" />
                        <path d="M414 236v246" stroke="#a9a9a9" />
                        <path d="M406 233h10M406 485h10M417 221v9M417 489v8" stroke="#ececec" />
                        <path d="M422 216h2v18h-2zM425 216h2v18h-2zM422 484h2v18h-2zM425 484h2v18h-2z" fill="#c3c3c3" />

                        <!-- right nozzles -->
                        <path d="M587 221h10v9h-10zM587 489h11v8h-11z" fill="#616161" />
                        <path d="M597 216h3v19h-3z" fill="#777" />

                        <!-- feed line -->
                        <path d="M602 493q8 0 8 8v33q0 8 8 8h116" fill="none" stroke="#7b7b7b" stroke-width="8" />
                        <path d="M602 492q8 0 8 8v34q0 7 8 7h116" fill="none" stroke="#b8b8b8" stroke-width="3" />
                        <path d="M598 484h2v18h-2zM601 484h2v18h-2z" fill="#bdbdbd" />
                        <path d="M605 501h10M605 534h10M618 537v10" stroke="#e2e2e2" />
                        <path d="M734 540h448v5H734z" fill="url(#along)" />
                        <path d="M729 538h4v8h-4zM735 539h3v6h-3z" fill="#999" />
                        <path d="M730 537v10M734 538v8M738 538v7" stroke="#d2d2d2" />
                        {@render valve(708, 542)}

                        <!-- strainer -->
                        <path d="M925 542l10 8" stroke="#8c8c8c" stroke-width="7" />
                        <path d="M918 540h4M926 543l9 7" stroke="#bbb" stroke-width="2" />
                        <path d="M919 538v8M929 538v7" stroke="#a0a0a0" />

                        <!-- pump -->
                        <path d="M981 534h4v17h-4zM1014 534h4v17h-4z" fill="#9aa394" />
                        <path d="M985 537h3v11h-3zM1011 537h3v11h-3z" fill="#82c656" />
                        <path d="M988 539h23v7h-23z" fill="#7abb4d" />
                        <ellipse cx="999" cy="542" rx="10" ry="6" fill="#80cb50" />
                        <path d="M990 542q9 5 19 0M995 536q4-3 9 0" fill="none" stroke="#4c8a30" />
                        <path d="M993 547h13v3h-13z" fill="#8bcc5e" />
                        <path d="M993 517h13v17l3 3h-18l2-3z" fill="url(#motor)" />
                        <path d="M993 517h13v2h-13z" fill="#b6e38e" />
                        <path d="M997 520v13M1002 520v13" stroke="#4f9832" />

                        <!-- check valve -->
                        <path d="M1052 537h3v9h-3zM1062 537h3v9h-3zM1054 536h9v10h-9zM1054 535h8v2h-8z" fill="#8b8d91" />
                        <path d="M1055 539l3 3 4-4" fill="none" stroke="#bbbec2" />

                        {@render valve(1162, 543)}
                        <path d="M1167 544h17" stroke="#dcdcdc" />
                        <path d="M1184 539l3 6h-3z" fill="none" stroke="#d6a247" />

                        <!-- ucs axes -->
                        <path d="M162 591h27" stroke="#b5575c" stroke-width="3" />
                        <path d="M189 558v33" stroke="#4b76c8" stroke-width="4" />
                        <path d="M187 550h8l-7 7h7" fill="none" stroke="#2f5fae" />
                        <path d="M187 591h4v-5M190 587l5-6" fill="none" stroke="#3f9a52" />
                    </svg>

                    <div class="vplabel">[&minus;][Top][Shaded]</div>
                    <div class="vpbtns">
                        <button aria-label="Minimize drawing">{@render icon('minimize', 8)}</button>
                        <button aria-label="Restore drawing">{@render icon('restore', 7)}</button>
                        <button aria-label="Close drawing">{@render icon('close', 6)}</button>
                    </div>
                    <div class="compass">
                        <span class="n">N</span>
                        <span class="w">W</span>
                        <button class="face"><span>BACK</span></button>
                        <span class="e">E</span>
                        <span class="s">S</span>
                    </div>
                    <button class="ucsname">Unnamed <i class="caret"></i></button>
                </div>

                <div class="console">
                    <div class="grip">
                        <i class="dots"></i>
                        {@render icon('close', 7)}
                        {@render icon('wrench', 11)}
                    </div>
                    <div class="lines">
                        <div class="history">Command:<br>Command:</div>
                        <label class="entry">
                            {@render icon('prompt', 11)}
                            <i class="caret dark"></i>
                            <input type="text" aria-label="Command" placeholder="Type a command" bind:value={command}>
                        </label>
                    </div>
                </div>
            </div>

            <aside class="palette">
                <div class="spine">
                    {@render icon('close', 7)}
                    {@render icon('pin', 7)}
                    {@render icon('gear', 8)}
                    <span>PROPERTIES</span>
                    {@render icon('panel', 9)}
                </div>
                <div class="props">
                    <div class="pick">
                        <div class="select">
                            <select aria-label="Selection"><option>No selection</option></select>
                            <i class="caret"></i>
                        </div>
                        {@render icon('selAdd', 11)}{@render icon('target', 10)}{@render icon('quick', 12)}
                    </div>
                    <button class="group">General<i class="caret"></i></button>
                    <table class="general">
                        <tbody>
                            {#each general as [label, value, mark]}
                                <tr><th>{label}</th><td><div>{#if mark}<i class={mark}></i>{/if}{value}</div></td></tr>
                            {/each}
                        </tbody>
                    </table>
                    <button class="group">3D Visualization<i class="caret"></i></button>
                    <table>
                        <tbody><tr><th>Material</th><td>ByLayer</td></tr></tbody>
                    </table>
                    {#each ['Plot style', 'View', 'Misc'] as name}
                        <button class="group shut">{name}<i class="left"></i></button>
                    {/each}
                </div>
                <div class="sidetabs">
                    <button class="active"><span>Design</span></button>
                    <button><span>Display</span></button>
                    <button><span>Extended Data</span></button>
                </div>
            </aside>
        </div>

        <footer>
            <div class="layouts">
                <button class="active">Model</button>
                <button>Work</button>
                <button aria-label="New layout">+</button>
            </div>
            <div class="status">
                {#each statusItems as item}
                    <button class:on={item.on} class:end={item.end} aria-label={item.text || item.icon || 'Options'}>
                        {#if item.icon}{@render icon(item.icon)}{/if}
                        {#if item.text}<span>{item.text}</span>{/if}
                        {#if item.caret}<i class="caret"></i>{/if}
                    </button>
                {/each}
            </div>
        </footer>
    </main>

    <nav class="taskbar">
        {#each systemApps as name}
            <button aria-label={name}>{@render icon(name, name === 'find' ? 11 : 12)}</button>
        {/each}
        {#each apps as name, i}
            <button class="pinned" class:running={i === apps.length - 1} aria-label={name}>
                {#if name.length === 2}
                    <b class={name}>{name}</b>
                {:else}
                    {@render icon(name, name === 'acad' ? 13 : 15)}
                {/if}
            </button>
        {/each}
        <div class="tray">
            {@render icon('weather', 14)}
            <span class="temp">33°C&nbsp;&nbsp; Partly sunny</span>
            {@render icon('chevron', 9)}
            {@render icon('meet', 10)}
            {@render icon('network', 11)}
            {@render icon('volume', 11)}
            <span class="lang">ENG</span>
            <div class="clock">7:22 PM<br>5/17/2022</div>
            <button class="notice" aria-label="7 notifications">{@render icon('notice', 12)}<small>7</small></button>
        </div>
    </nav>
</div>

<style>
:global(body) {
    margin: 0;
    background: #222831;
}

.screen {
    display: flex;
    flex-direction: column;
    min-width: 1280px;
    height: 100vh;
    overflow: hidden;
    color: #eceef1;
    font: 8px/12px "Open Sans", "Noto Sans", sans-serif;
    cursor: default;
}

.screen * {
    box-sizing: border-box;
}

button,
input,
select {
    margin: 0;
    padding: 0;
    border: 0;
    border-radius: 0;
    background: none;
    color: inherit;
    font: inherit;
    outline: none;
    appearance: none;
}

button {
    display: flex;
    align-items: center;
    justify-content: center;
    white-space: nowrap;
}

input::placeholder {
    color: #b8bfca;
    font-style: italic;
    opacity: 1;
}

h1, h2, h3 {
    margin: 0;
    font: inherit;
}

.icon {
    display: block;
    flex: none;
    overflow: visible;
}

.caret, .up, .left, .right {
    flex: none;
    width: 0;
    height: 0;
    border: 3px solid transparent;
}
.caret {
    border-bottom: 0;
    border-top-color: #dce0e5;
}
.caret.small {
    border-width: 2px;
    border-bottom: 0;
}
.caret.dark {
    border-top-color: #222;
}
.up {
    border-top: 0;
    border-bottom-color: #eef0f2;
}
.left {
    border-left: 0;
    border-right-color: #eef0f2;
}
.right {
    border-right: 0;
    border-left-color: #eef0f2;
}

.window {
    flex: 1;
    min-height: 0;
    display: flex;
    flex-direction: column;
    background: #222831;
    border: solid #11707f;
    border-width: 2px 4px 0;
    border-top-color: #3fa3a8;
    border-left-color: #0c4f5c;
    border-right-color: #1c7d8d;
}

/* title bar and ribbon tabs */
header {
    display: flex;
    height: 32px;
}
.app {
    position: relative;
    align-self: center;
    flex-direction: column;
    width: 27px;
    height: 27px;
    background: linear-gradient(#e6e6e6, #9fa0a2);
    color: #222;
}
.app span {
    font-size: 7px;
    line-height: 7px;
    font-weight: bold;
}
.app .caret {
    position: absolute;
    right: 2px;
    top: 11px;
}
.head {
    flex: 1;
    display: flex;
    flex-direction: column;
}
.titlebar {
    display: flex;
    align-items: center;
    height: 19px;
}
.qat {
    display: flex;
    align-items: center;
    padding-left: 4px;
}
.qbtn {
    width: 16px;
    height: 16px;
}
.drop {
    width: 9px;
    height: 16px;
}
.rule {
    width: 1px;
    height: 14px;
    margin: 0 4px;
    background: #565d68;
}
h1 {
    flex: 1;
    text-align: center;
}
.info {
    display: flex;
    align-items: center;
    padding-right: 40px;
}
.info .rule {
    margin: 0 2px;
}
.info input {
    width: 118px;
    height: 13px;
    margin: 0 2px 0 4px;
    padding: 0 2px;
    background: #454c5f;
}
.sign {
    gap: 4px;
    margin-left: 2px;
}
.sign .caret {
    margin: 0 4px 0 28px;
}
.winbtns {
    display: flex;
}
.winbtns button {
    width: 16px;
    height: 14px;
}

.tabs {
    display: flex;
    height: 13px;
    padding-left: 4px;
    color: #cbd0d7;
}
.tabs button {
    padding: 0 6px;
}
.tabs .active {
    background: #3b4453;
    color: #fff;
}
.tabs .rec {
    gap: 4px;
    margin-left: 6px;
}
.pill {
    width: 9px;
    height: 6px;
    border: 2px solid #e5e8ec;
    border-radius: 2px;
    background: #333;
}

.ribbon {
    display: grid;
    grid-template-columns: 193px 84px 117px 26px 143px 77px 119px 53px;
    height: 65px;
}
.panel {
    display: flex;
    flex-direction: column;
    background: #3b4453;
    border-right: 1px solid #2d3440;
}
.panel h2 {
    display: flex;
    align-items: center;
    justify-content: center;
    gap: 4px;
    height: 15px;
}
.body {
    display: flex;
    height: 50px;
    padding-top: 2px;
}
.big {
    flex-direction: column;
    justify-content: flex-start;
    padding-top: 2px;
    line-height: 10px;
    gap: 2px;
    flex: none;
}
.big b {
    height: 22px;
    font: 24px/22px "Liberation Sans", sans-serif;
}
.ruled {
    border-right: 1px solid #2d3440;
}
.list {
    display: flex;
    flex-direction: column;
}
.cmd {
    justify-content: flex-start;
    gap: 4px;
    height: 16px;
}
.build .big { width: 39px; }
.build .list { width: 69px; padding-left: 6px; }
.draw .big { width: 32px; }
.modify .big { width: 42px; }
.annotation .big { width: 28px; }
.section .big { width: 34px; }
.details .big { width: 52px; }

.tool {
    justify-content: flex-start;
    gap: 4px;
    height: 16px;
}
.grid {
    display: grid;
    grid-auto-rows: 16px;
}
.grid.two {
    grid-template-columns: 26px 26px;
    padding-left: 1px;
}
.annotation .grid {
    grid-template-columns: 25px 24px;
}
.grid.one {
    padding-left: 3px;
}
.rows {
    flex: 1;
    padding-left: 1px;
}
.rows > div {
    display: flex;
    gap: 4px;
}
.body.layers {
    flex-direction: column;
    padding: 2px 7px 0 2px;
    gap: 3px;
}
.strip {
    display: flex;
    justify-content: space-between;
    height: 13px;
}

.select {
    display: flex;
    align-items: center;
    height: 14px;
    padding: 0 3px 0 2px;
    border: 1px solid #323a47;
    background: #4b586a;
}
.select select,
.select input {
    flex: 1;
    min-width: 0;
    height: 12px;
    overflow: hidden;
}
.select.layer {
    gap: 3px;
    background: #454e5d;
}
.chip {
    width: 9px;
    height: 9px;
    background: #fff;
    border: 1px solid #222;
}

/* drawing file tabs */
.files {
    display: flex;
    align-items: flex-end;
    height: 20px;
    padding-left: 14px;
    border-bottom: 2px solid #3b424d;
    color: #c8cdd5;
}
.file {
    justify-content: flex-start;
    width: 82px;
    height: 15px;
    padding: 0 10px 0 7px;
    border-radius: 8px 10px 0 0;
    background: #2c323e;
}
.file.current {
    justify-content: space-between;
    width: 84px;
    background: #3b4453;
    color: #eceef1;
}
.file.add {
    justify-content: center;
    width: 17px;
    height: 13px;
    margin-left: 2px;
    padding: 0;
    border-radius: 6px;
}

.work {
    position: relative;
    flex: 1;
    min-height: 0;
    display: flex;
}
.browser {
    width: 151px;
    background: #3b4453;
    border-right: 1px solid #2a313c;
}
.browser h3 {
    display: flex;
    align-items: center;
    gap: 4px;
    height: 14px;
    padding-left: 4px;
    background: #2d3440;
}
.handle {
    height: 8px;
    border-left: 2px dotted #8b929c;
}
.filters {
    display: grid;
    grid-template-columns: 119px 11px;
    gap: 4px;
    padding: 6px 0 0 8px;
}
.filters .select {
    grid-column: 1;
    height: 15px;
}
.ask {
    grid-column: 2;
}
.find {
    color: #7d8896;
}
.fold {
    width: 100%;
    height: 14px;
    padding-right: 2px;
}
.styles {
    margin: 0 8px 0 7px;
}
.styletools {
    display: flex;
    align-items: center;
    gap: 5px;
    height: 17px;
    padding: 0 3px;
    background: #222831;
}
.styletools span {
    flex: 1;
}
.styletools .caret {
    border-top-color: #69717c;
}
.scroll {
    display: flex;
}
.scroll table {
    flex: 1;
    height: 127px;
    border-collapse: collapse;
    white-space: nowrap;
}
.scroll th {
    height: 12px;
    padding: 0 0 0 1px;
    background: #222831;
    font-weight: normal;
    line-height: 12px;
    text-align: left;
}
.scroll td {
    padding: 0 0 0 1px;
    border-bottom: 1px solid #2b323e;
    max-width: 124px;
    line-height: 11px;
}
.bar {
    width: 9px;
    height: 130px;
    padding: 4px 1px;
    border: 1px solid #2a313c;
    background: linear-gradient(#6a7280 12px, #505a69 12px);
}
.bar .up {
    display: block;
    border-bottom-color: #22272f;
}

.center {
    flex: 1;
    min-width: 0;
    display: flex;
    flex-direction: column;
}
.viewport {
    position: relative;
    flex: 1;
    min-height: 0;
    background: #212830;
}
.drawing {
    display: block;
    width: 100%;
    height: 100%;
}
.vplabel {
    position: absolute;
    left: 3px;
    top: 4px;
}
.vpbtns {
    position: absolute;
    top: 6px;
    right: 5px;
    display: flex;
    color: #fff;
}
.vpbtns button {
    width: 13px;
    height: 8px;
}
.compass {
    position: absolute;
    top: 30px;
    right: 15px;
    width: 80px;
    height: 80px;
    border: 9px solid #414951;
    border-radius: 50%;
    color: #b4b7bb;
    font: bold 14px/14px "Liberation Sans", sans-serif;
}
.compass > span {
    position: absolute;
}
.n { top: -12px; left: 26px; }
.s { bottom: -14px; left: 26px; }
.w { left: -13px; top: 25px; }
.e { right: -11px; top: 25px; }
.face {
    position: absolute;
    top: 14px;
    left: 14px;
    width: 34px;
    height: 35px;
    background: linear-gradient(#b8bbbe, #9b9ea1);
    color: #3d454e;
    font: bold 8px/20px Roboto, sans-serif;
}
.face span {
    background: #a3abb2;
}
.ucsname {
    position: absolute;
    top: 129px;
    right: 33px;
    gap: 2px;
    height: 12px;
    padding: 0 2px;
    border: 1px solid #b4b6bc;
    border-radius: 3px;
    background: #9c9ea6;
    color: #505660;
    font-size: 7px;
    line-height: 10px;
}
.ucsname .caret {
    border-top-color: #8b8e96;
}

.console {
    display: flex;
    height: 44px;
    background: #2b323c;
}
.grip {
    display: flex;
    flex-direction: column;
    align-items: center;
    width: 17px;
    padding-top: 3px;
    gap: 5px;
    color: #fff;
}
.grip .icon:last-child {
    margin-top: 3px;
}
.dots {
    width: 12px;
    height: 4px;
    background: repeating-linear-gradient(90deg, #dfe3e8 0 1px, #2b323c 1px 2px);
}
.lines {
    flex: 1;
    display: flex;
    flex-direction: column;
    color: #333;
    font: 8px/10px "DejaVu Sans Mono", monospace;
}
.history {
    flex: 1;
    display: flex;
    align-items: flex-end;
    margin-top: 1px;
    padding: 0 1px;
    border-bottom: 1px solid #8a8a8a;
    background: #c8c8c8;
}
.entry {
    display: flex;
    align-items: center;
    gap: 1px;
    height: 14px;
    padding: 0 2px;
    background: #fff;
}
.entry input {
    flex: 1;
    margin-left: 3px;
}
.entry input::placeholder {
    color: #777;
}

/* floating properties palette */
.palette {
    position: absolute;
    left: -4px;
    top: 253px;
    display: flex;
    width: 161px;
    height: 303px;
}
.spine {
    display: flex;
    flex-direction: column;
    align-items: center;
    gap: 5px;
    width: 16px;
    padding: 2px 0;
    background: #2b313c;
    color: #dfe3e8;
}
.spine span {
    margin-top: auto;
    margin-bottom: 3px;
    writing-mode: vertical-rl;
    transform: rotate(180deg);
    font-size: 7px;
    color: #cbd0d7;
}
.props {
    display: flex;
    flex-direction: column;
    width: 132px;
    padding: 9px 9px 0 12px;
    background: #3b4453;
}
.pick {
    display: flex;
    align-items: center;
    justify-content: space-between;
    height: 14px;
    margin-bottom: 3px;
}
.pick .select {
    width: 63px;
}
.group {
    justify-content: space-between;
    flex: none;
    height: 13px;
    padding: 0 5px 0 4px;
    background: #2b323e;
    color: #e9ebee;
    font-weight: bold;
}
.shut {
    margin-top: 2px;
}
.props table {
    width: 99px;
    margin-left: 12px;
    border-collapse: collapse;
    table-layout: fixed;
}
.props .general {
    height: 90px;
}
.props th,
.props td {
    height: 12px;
    padding: 0 0 0 3px;
    border: 1px solid #333b48;
    border-top: 0;
    font-weight: normal;
    line-height: 11px;
    text-align: left;
    white-space: nowrap;
    color: #c6cbd3;
}
.props th {
    width: 43px;
}
.props td {
    padding-left: 1px;
    color: #eceef1;
}
.props td div {
    display: flex;
    align-items: center;
}
.swatch {
    width: 6px;
    height: 6px;
    margin: 0 4px 0 2px;
    background: #c9c9c9;
    border: 1px solid #eee;
}
.stroke {
    width: 22px;
    height: 1px;
    margin: 0 3px 0 2px;
    background: #dfe3e8;
}
.sidetabs {
    width: 13px;
}
.sidetabs button {
    width: 13px;
    height: 81px;
    border: solid #222831;
    border-width: 0 0 1px 1px;
    background: #2b323e;
    color: #c6cbd3;
}
.sidetabs .active {
    border-left-color: #3b4453;
    background: #3b4453;
    color: #eceef1;
}
.sidetabs span {
    writing-mode: vertical-rl;
    transform: rotate(180deg);
}

footer {
    display: flex;
    justify-content: space-between;
    height: 22px;
    border-bottom: 1px solid #3b4453;
}
.layouts {
    display: flex;
    gap: 3px;
    height: 14px;
    padding-left: 9px;
}
.layouts button {
    padding: 0 7px;
    border-radius: 0 0 6px 6px;
    background: #2c323e;
    color: #9ba2ac;
}
.layouts .active {
    background: #3b4453;
    color: #fff;
    font-weight: bold;
}
.status {
    display: grid;
    grid-template-columns:
        121px 33px 16px 17px 11px 17px 16px 16px 10px 17px
        17px 9px 17px 18px 16px 17px 14px 34px 28px 15px
        56px 16px 25px 18px 62px 18px 20px 16px 20px 18px 20px 16px;
    margin: 1px 0 2px;
    background: #2d3541;
    color: #eceef1;
}
.status button {
    gap: 4px;
    margin-right: 1px;
    background: #363f4d;
}
.status .on {
    background: #5082b8;
}
.status .end {
    justify-content: flex-end;
    padding-right: 4px;
}

.taskbar {
    display: flex;
    height: 27px;
    background: #eee;
    color: #222;
}
.taskbar > button {
    width: 32px;
}
.taskbar .pinned {
    width: 33px;
}
.pinned b {
    width: 14px;
    height: 14px;
    border: 1px solid #b88ce8;
    background: #2a0a3a;
    color: #d9a8ff;
    line-height: 12px;
    font-weight: normal;
}
.pinned .Ps {
    border-color: #3f9fe0;
    background: #0b2238;
    color: #5ab8f5;
}
.taskbar .running {
    background: #fafafa;
    border-bottom: 2px solid #1a74c4;
}
.tray {
    display: flex;
    align-items: center;
    margin-left: auto;
    gap: 6px;
    padding-right: 10px;
}
.temp {
    font-size: 9px;
}
.clock {
    width: 38px;
    text-align: center;
}
.notice {
    position: relative;
    width: 22px;
    height: 20px;
}
.notice small {
    position: absolute;
    right: 0;
    bottom: 0;
    width: 10px;
    height: 10px;
    border: 1px solid #777;
    border-radius: 50%;
    background: #d5d5d5;
    font-size: 7px;
    line-height: 8px;
}
</style>
